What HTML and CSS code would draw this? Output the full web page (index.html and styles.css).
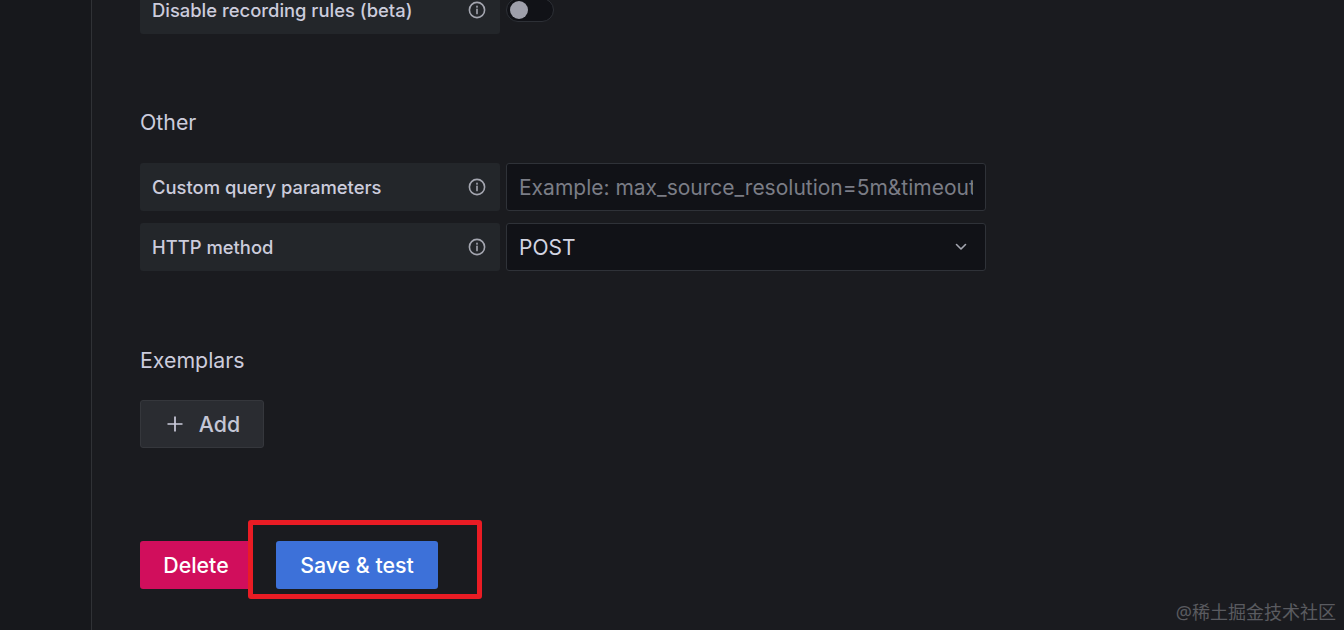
FILE: index.html
```html
<!DOCTYPE html>
<html lang="en">
<head>
<meta charset="utf-8">
<title>Data source settings</title>
<link rel="stylesheet" href="styles.css">
</head>
<body>
<div class="page">
  <aside class="rail"></aside>
  <main class="content">
    <div class="row row-first">
      <div class="label"><span>Disable recording rules (beta)</span>
        <svg class="info" viewBox="0 0 18 18"><circle cx="9" cy="9" r="7.6"/><path d="M9 8.4v4.2"/><path d="M9 5.2v.9"/></svg>
      </div>
      <div class="switch"><span class="knob"></span></div>
    </div>

    <h3 class="heading heading-other">Other</h3>
    <div class="row">
      <div class="label"><span>Custom query parameters</span>
        <svg class="info" viewBox="0 0 18 18"><circle cx="9" cy="9" r="7.6"/><path d="M9 8.4v4.2"/><path d="M9 5.2v.9"/></svg>
      </div>
      <input class="field field-input" type="text" placeholder="Example: max_source_resolution=5m&amp;timeout=10">
    </div>
    <div class="row row-next">
      <div class="label"><span>HTTP method</span>
        <svg class="info" viewBox="0 0 18 18"><circle cx="9" cy="9" r="7.6"/><path d="M9 8.4v4.2"/><path d="M9 5.2v.9"/></svg>
      </div>
      <div class="field field-select"><span class="value">POST</span>
        <svg class="chev" viewBox="0 0 12 8"><path d="M1.5 1.5 6 6l4.5-4.5"/></svg>
      </div>
    </div>

    <h3 class="heading heading-ex">Exemplars</h3>
    <button class="btn btn-add" type="button">
      <svg class="plus" viewBox="0 0 18 18"><path d="M9 1.5v15M1.5 9h15"/></svg>
      <span>Add</span>
    </button>

    <div class="actions">
      <button class="btn btn-delete" type="button">Delete</button>
      <button class="btn btn-save" type="button">Save &amp; test</button>
    </div>
  </main>
</div>
<div class="highlight"></div>
<div class="watermark">@稀土掘金技术社区</div>
</body>
</html>
```
FILE: styles.css
```css
* { box-sizing: border-box; }
html, body { margin: 0; height: 100%; }
body {
  background: #1a1b1f;
  color: #ccccdc;
  font-family: Inter, "Liberation Sans", sans-serif;
  overflow: hidden;
  position: relative;
}
.page { display: flex; height: 630px; overflow: hidden; }
.rail { width: 92px; flex: none; border-right: 1px solid #303236; background: #17181c; }
.content { padding-left: 48px; flex: 1; min-width: 0; }

.row { display: flex; gap: 6px; height: 48px; }
.row-first { margin-top: -14px; }
.row-next { margin-top: 12px; }

.label {
  width: 360px; flex: none;
  display: flex; align-items: center; justify-content: space-between;
  padding: 0 14px 0 12px;
  background: #23262a;
  border-radius: 3px;
  font-size: 18.4px; font-weight: 500;
  color: #ccccdc;
}
.info { width: 18px; height: 18px; fill: none; stroke: #a4a6b0; stroke-width: 1.6; stroke-linecap: round; }

.switch {
  width: 48px; height: 24px; margin-top: 12px;
  border: 1px solid #2d3036; border-radius: 12px;
  background: #111217;
  padding: 2px 0 0 3px;
}
.knob { display: block; width: 18px; height: 18px; border-radius: 50%; background: #9fa0ab; }

.heading { margin: 0; font-size: 21.33px; font-weight: 400; line-height: 24px; color: #ccccdc; }
.heading-other { margin-top: 76px; margin-bottom: 29px; }
.heading-ex { margin-top: 77px; margin-bottom: 28px; }

.field {
  width: 480px; flex: none;
  display: flex; align-items: center;
  padding: 0 12px;
  background: #111217;
  border: 1px solid #2f3238;
  border-radius: 3px;
  font-family: inherit;
  font-size: 21px;
  color: #d3d5e2;
  outline: none;
}
.field-input::placeholder { color: #7b7d86; opacity: 1; }
.field-select { justify-content: space-between; padding-right: 18px; }
.value { color: #d3d5e2; }
.chev { width: 12px; height: 8px; fill: none; stroke: #a4a6b0; stroke-width: 1.6; stroke-linecap: round; stroke-linejoin: round; }

.btn {
  height: 48px; border-radius: 3px; border: 0;
  font-family: inherit; font-size: 21.33px; font-weight: 500;
  display: inline-flex; align-items: center; justify-content: center;
  padding: 0;
}
.btn-add {
  width: 124px; gap: 15px; padding-left: 2px;
  background: #2a2c31; border: 1px solid #35373c; color: #c4c6d6;
}
.plus { width: 18px; height: 18px; fill: none; stroke: #ccccdc; stroke-width: 1.7; }
.actions { display: flex; gap: 24px; margin-top: 93px; }
.btn-delete { width: 112px; background: #d10e5c; color: #fff; }
.btn-save { width: 162px; background: #3d71d9; color: #fff; }

.highlight {
  position: absolute; left: 248px; top: 520px; width: 234px; height: 79px;
  border: 5px solid #ea1c24; border-radius: 3px;
}
.watermark {
  position: absolute; right: 8px; top: 601px;
  font-family: "Noto Sans", "Noto Sans CJK SC", sans-serif;
  font-size: 18px; line-height: 22px;
  color: #5a5b60;
}
```
